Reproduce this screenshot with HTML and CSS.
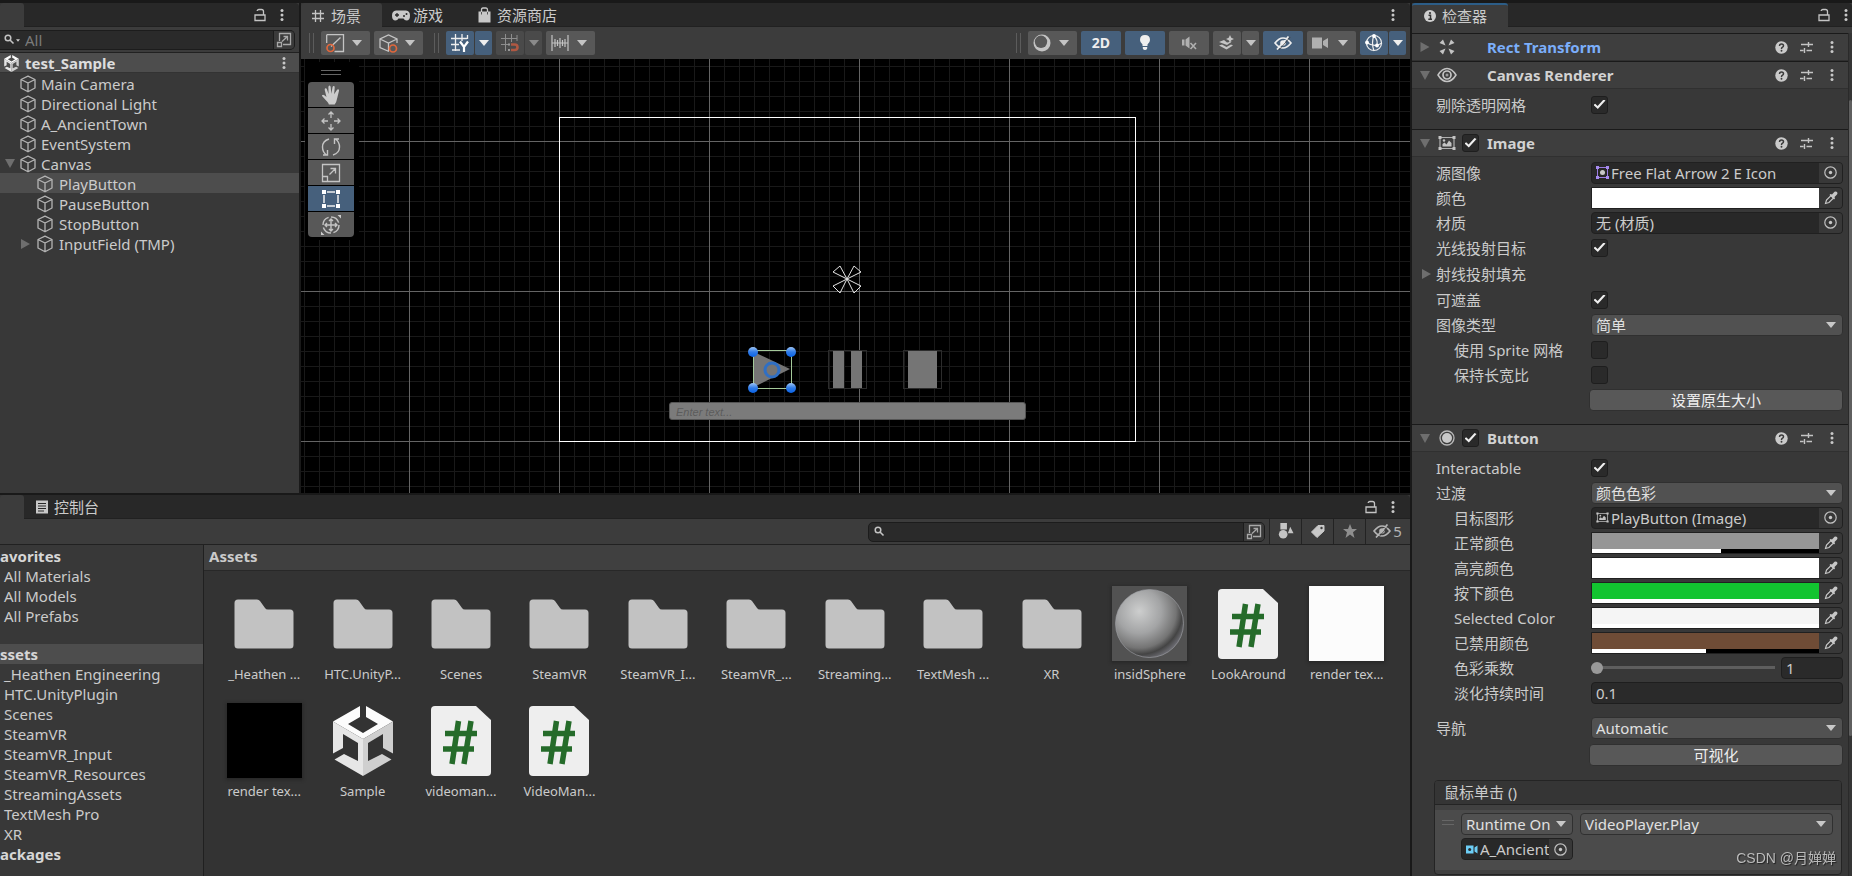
FILE: index.html
```html
<!DOCTYPE html>
<html lang="zh-CN">
<head>
<meta charset="utf-8">
<title>test_Sample</title>
<link rel="stylesheet" href="styles.css">
</head>
<body>
<svg class="defs" aria-hidden="true">
  <symbol id="lock" viewBox="0 0 12 14"><path d="M1 7h10v5.500H1zM9.500 7V3.500Q9.500 1.500 7.500 1.500H5Q3.200 1.500 3.200 3" fill="none" stroke="#c4c4c4" stroke-width="1.300"/></symbol>
  <symbol id="kebab" viewBox="0 0 4 14"><g fill="#c8c8c8"><circle cx="2" cy="2.500" r="1.500"/><circle cx="2" cy="7" r="1.500"/><circle cx="2" cy="11.500" r="1.500"/></g></symbol>
  <symbol id="cube" viewBox="0 0 16 18"><path d="M8 1.200L15 4.500V13L8 16.800L1 13V4.500zM1 4.500L8 8L15 4.500M8 8V16.800" fill="none" stroke="#b4b4b4" stroke-width="1.300" stroke-linejoin="round"/></symbol>
  <symbol id="down" viewBox="0 0 10 6"><path d="M0 0H10L5 6z" fill="currentColor"/></symbol>
  <symbol id="fold" viewBox="0 0 10 9"><path d="M0 0H10L5 9z" fill="currentColor"/></symbol>
  <symbol id="right" viewBox="0 0 9 10"><path d="M0 0L9 5L0 10z" fill="currentColor"/></symbol>
  <symbol id="search" viewBox="0 0 12 12"><circle cx="4" cy="4" r="2.800" fill="none" stroke="#c4c4c4" stroke-width="1.500"/><path d="M6 6L9.500 9.500" stroke="#c4c4c4" stroke-width="1.600"/></symbol>
  <symbol id="popout" viewBox="0 0 16 16"><path d="M3.500 9V1.500H14.500V12.500H7M1.500 10.500H5.500V14.500H1.500zM6 9.500L11.500 4.500M7.500 4.500H11.500V8.500" fill="none" stroke="#a8a8a8" stroke-width="1.300"/></symbol>
  <symbol id="unity" viewBox="0 0 60 70"><path d="M27 0V11L15 18L30 27L45 18L33 11V0L60 15.500L30 33L0 15.500z" fill="#fcfcfc"/><path d="M0 15.500L30 33V70L1.500 53.500L11 48L25 55V37L10 28V42L0 47.500z" fill="#e6e6e6"/><path d="M60 15.500L30 33V70L58.500 53.500L49 48L35 55V37L50 28V42L60 47.500z" fill="#cfcfcf"/></symbol>
  <symbol id="folder" viewBox="0 0 60 50"><path d="M4 0.500H23Q25 0.500 26 2L31 9Q32 10.500 34 10.500H56Q59.500 10.500 59.500 14V46Q59.500 49.500 56 49.500H4Q0.500 49.500 0.500 46V4Q0.500 0.500 4 0.500z" fill="#c2c2c2"/></symbol>
  <symbol id="script" viewBox="0 0 60 70"><path d="M4 0H45L60 14V66Q60 70 56 70H4Q0 70 0 66V4Q0 0 4 0z" fill="#eee"/><path d="M27.500 15L21 58M40 15L33 58M14 27.500H46M12 43H43" fill="none" stroke="#256b2a" stroke-width="5.500"/></symbol>
  <symbol id="sphere" viewBox="0 0 75 75"><defs><radialGradient id="ball" cx=".35" cy=".32" r=".72"><stop offset="0" stop-color="#cdcece"/><stop offset=".45" stop-color="#a3a4a5"/><stop offset=".75" stop-color="#747474"/><stop offset=".88" stop-color="#444"/><stop offset="1" stop-color="#6a6a70"/></radialGradient></defs><path d="M0 0H75V75H0z" fill="#525252"/><circle cx="37.500" cy="37.500" r="34" fill="url(#ball)" stroke="#a2a3a8" stroke-opacity=".6"/></symbol>
  <symbol id="hash" viewBox="0 0 14 14"><path d="M4.500 1V13M9.500 1V13M1 4.500H13M1 9.500H13" stroke="#c4c4c4" stroke-width="1.300"/></symbol>
  <symbol id="pad" viewBox="0 0 18 11"><path d="M4 0.500H14Q18 1 18 5.500Q18 10.500 14.500 10.500Q12.500 10.500 11.500 8.500H6.500Q5.500 10.500 3.500 10.500Q0 10.500 0 5.500Q0 1 4 0.500z" fill="#c8c8c8"/><path d="M5 3v4M3 5h4" stroke="#282828" stroke-width="1.300"/><circle cx="12" cy="6" r="1" fill="#282828"/><circle cx="14.500" cy="4" r="1" fill="#282828"/></symbol>
  <symbol id="bag" viewBox="0 0 13 16"><path d="M0.500 4.500H12.500V15.500H0.500z" fill="#c8c8c8"/><path d="M3.500 7V3Q3.500 1 5 1H8Q9.500 1 9.500 3V7" fill="none" stroke="#c8c8c8" stroke-width="1.300"/><path d="M3.500 5V7.500M9.500 5V7.500" stroke="#555"/></symbol>
  <symbol id="console" viewBox="0 0 12 14"><path d="M0 0.500H12V13.500H0z" fill="#c8c8c8"/><path d="M2 3.500H10M2 6H10M2 8.500H10M2 11H8" stroke="#282828" stroke-width="1.200"/></symbol>
  <symbol id="info" viewBox="0 0 12 12"><circle cx="6" cy="6" r="6" fill="#cfcfcf"/><path d="M4.500 5.300H6.500V9M4.300 9.200H8" fill="none" stroke="#333" stroke-width="1.500"/><circle cx="6" cy="3" r="1.100" fill="#333"/></symbol>
  <symbol id="shading" viewBox="0 0 19 19"><path d="M0.700 0.700H17.500V17.500H8.500M0.700 9V0.700M5 12.500L14.500 3.500" fill="none" stroke="#c4c4c4" stroke-width="1.300"/><circle cx="4.500" cy="14" r="3.500" fill="none" stroke="#e0673c" stroke-width="1.700"/></symbol>
  <symbol id="cubeo" viewBox="0 0 19 19"><path d="M10 17.500L1 13.500V5L9.500 1L18 5V9M1 5L9.500 9L18 5M9.500 9V17" fill="none" stroke="#c4c4c4" stroke-width="1.300"/><circle cx="14" cy="14.500" r="3.500" fill="#585858" stroke="#e0673c" stroke-width="1.700"/></symbol>
  <symbol id="gridy" viewBox="0 0 18 18"><path d="M4.500 0V17M11 0V7M16.500 1V5M0 4.500H16M0 10.500H8M1 16H9" stroke="#eee" stroke-width="1.300"/><path d="M9 7.500L13 13L17 7.500M13 12.500V18" fill="none" stroke="#fff" stroke-width="2.200"/></symbol>
  <symbol id="snap" viewBox="0 0 18 18"><path d="M4.500 0V17M10.500 0V8M0 4.500H16M0 10.500H7M16 1V7" stroke="#8d8d8d" stroke-width="1"/><path d="M10 10.500H13.500Q16.500 10.500 16.500 13.200Q16.500 16 13.500 16H10" fill="none" stroke="#b05842" stroke-width="2.600"/><path d="M7 9.500h2v2H7zM7 15h2v2H7z" fill="#999"/></symbol>
  <symbol id="ruler" viewBox="0 0 18 18"><path d="M1 1V17M17 1V17M4 5V13M6.500 6V12M9 4V14M11.500 6V12M14 5V13M1 9H17" stroke="#c4c4c4" stroke-width="1.200"/></symbol>
  <symbol id="moon" viewBox="0 0 18 18"><circle cx="9" cy="9" r="8.500" fill="#c4c4c4"/><circle cx="8" cy="7.800" r="6.200" fill="#585858"/></symbol>
  <symbol id="bulb" viewBox="0 0 12 18"><path d="M6 1Q11 1 11 6Q11 8.500 8.500 10.500V12H3.500V10.500Q1 8.500 1 6Q1 1 6 1zM3.800 13H8.200V14.500Q7.500 16 6 16Q4.500 16 3.800 14.500z" fill="#eee"/></symbol>
  <symbol id="mute" viewBox="0 0 16 16"><path d="M1 4.500H3.500V10.500H1zM4.500 4.500L8.500 1.500V13.500L4.500 10.500z" fill="#b0b0b0"/><path d="M9.500 8L15 14M15 8L9.500 14" stroke="#b0b0b0" stroke-width="1.600"/></symbol>
  <symbol id="fx" viewBox="0 0 16 16"><path d="M0 7L5 5L8 7.500L13 6.500L8 10zM0 10.500L3 9.500L7.500 12L12 9.500L14 10.500L7.500 14.500z" fill="#c4c4c4"/><path d="M11 0L12.300 2.700L15 4L12.300 5.300L11 8L9.700 5.300L7 4L9.700 2.700z" fill="#c4c4c4"/></symbol>
  <symbol id="eyeoff" viewBox="0 0 18 14"><path d="M1 7Q5 2 9 2Q13 2 17 7Q13 12 9 12Q5 12 1 7zM14.500 0.500L3 13.500" fill="none" stroke="currentColor" stroke-width="1.700"/><circle cx="9" cy="7" r="2.800" fill="currentColor"/><path d="M16.300 1L5 14" stroke="#444" stroke-width=".8"/></symbol>
  <symbol id="cam" viewBox="0 0 16 12"><path d="M0 0.500H10V11.500H0zM11 4L16 1V11L11 8z" fill="#b0b0b0"/></symbol>
  <symbol id="gizmo" viewBox="0 0 18 18"><circle cx="9" cy="9" r="7.500" fill="none" stroke="#eee" stroke-width="1.200"/><path d="M9 1Q6 9 9 17M1 8Q9 14 17 9M9 2Q13 6 12 11" fill="none" stroke="#eee" stroke-width="1.200"/><circle cx="9" cy="2" r="1.900" fill="#fff"/><circle cx="2" cy="8.500" r="1.900" fill="#fff"/><circle cx="12" cy="11.500" r="1.900" fill="#fff"/></symbol>
  <symbol id="hand" viewBox="0 0 18 19"><path d="M5.500 16Q4 14.500 0.500 10.500Q0 9.500 1.500 9.300Q3 9.500 4.700 11.500L3 4.500Q3 3.200 4 3.200Q4.800 3.200 5.200 4.300L6.700 8.500L6.500 2Q6.700 0.500 7.600 0.500Q8.500 0.500 8.700 2L9.300 8.200L10.500 1.800Q11 0.700 11.800 0.900Q12.700 1.200 12.500 2.500L12 8.800L14.600 4.800Q15.500 3.700 16.300 4.300Q17 4.800 16.500 6L15 12Q14.300 16 12.500 18.500H7Q6.500 17 5.500 16z" fill="#ccc"/></symbol>
  <symbol id="move" viewBox="0 0 20 20"><path d="M10 1V7M10 13V19M1 10H7M13 10H19M7.500 3.500L10 1L12.500 3.500M7.500 16.500L10 19L12.500 16.500M3.500 7.500L1 10L3.500 12.500M16.500 7.500L19 10L16.500 12.500" fill="none" stroke="#c4c4c4" stroke-width="1.300"/></symbol>
  <symbol id="rotate" viewBox="0 0 20 20"><path d="M8 2Q1.500 4 1.500 10Q1.500 15 5.500 18M2 18H6.500V13M12 18Q18.500 16 18.500 10Q18.500 5 14.500 2M18 2H13.500V7" fill="none" stroke="#c4c4c4" stroke-width="1.400"/></symbol>
  <symbol id="scale" viewBox="0 0 20 20"><path d="M1.500 1.500H18.500V18.500H1.500zM1.500 13.500H6.500V18.500M8.500 11.500L14 6M9.500 5.500H14.500V10.500" fill="none" stroke="#c4c4c4" stroke-width="1.300"/></symbol>
  <symbol id="recttool" viewBox="0 0 20 20"><path d="M1 1H5V5H1zM15 1H19V5H15zM1 15H5V19H1zM15 15H19V19H15z" fill="#fff"/><path d="M6 3H14M6 17H14M3 6V14M17 6V14" stroke="#eee" stroke-width="1.500"/></symbol>
  <symbol id="multi" viewBox="0 0 20 20"><circle cx="10" cy="10" r="8" fill="none" stroke="#c4c4c4" stroke-width="1.400" stroke-dasharray="10 2.500"/><path d="M10 4V16M4 10H16M8 6L10 4L12 6M8 14L10 16L12 14M6 8L4 10L6 12M14 8L16 10L14 12" fill="none" stroke="#c4c4c4" stroke-width="1.400"/><path d="M16.500 0H20V3.500zM0 16.500V20H3.500z" fill="#ccc"/></symbol>
  <symbol id="help" viewBox="0 0 13 13"><circle cx="6.500" cy="6.500" r="6.200" fill="#cacaca"/><path d="M4.500 5Q4.500 3 6.500 3Q8.500 3 8.500 4.800Q8.500 5.800 7.300 6.400Q6.500 6.800 6.500 8" fill="none" stroke="#3a3a3a" stroke-width="1.500"/><circle cx="6.500" cy="9.800" r=".95" fill="#3a3a3a"/></symbol>
  <symbol id="preset" viewBox="0 0 13 13"><path d="M1 3.500H8M8.500 1V6M8.500 3.500H13M0 9.500H3.500M4.500 7V12M6.500 9.500H12" fill="none" stroke="#c4c4c4" stroke-width="1.400"/></symbol>
  <symbol id="recttr" viewBox="0 0 16 16"><g fill="#c4c4c4"><path d="M6.500 6.500L0.500 4L4 0.500z"/><path d="M9.500 6.500L15.500 4L12 0.500z"/><path d="M6.500 9.500L0.500 12L4 15.500z"/><path d="M9.500 9.500L15.500 12L12 15.500z"/></g></symbol>
  <symbol id="eye" viewBox="0 0 20 16"><path d="M1 8Q5 1.500 10 1.500Q15 1.500 19 8Q15 14.500 10 14.500Q5 14.500 1 8z" fill="none" stroke="#c4c4c4" stroke-width="1.500"/><circle cx="10" cy="8" r="4" fill="none" stroke="#c4c4c4" stroke-width="1.700"/><circle cx="10" cy="8" r="1.500" fill="#999"/></symbol>
  <symbol id="image" viewBox="0 0 18 15"><path d="M2 2H16V13H2z" fill="none" stroke="#b0b0b0" stroke-width="1.200"/><path d="M0.500 0.500h3v3h-3zM14.500 0.500h3v3h-3zM0.500 11.500h3v3h-3zM14.500 11.500h3v3h-3zM4.500 11V8.500L6.500 7L8.500 9L11 5L13.500 7.500V11z" fill="#c4c4c4"/><circle cx="6" cy="5" r="1.200" fill="#c4c4c4"/></symbol>
  <symbol id="radio" viewBox="0 0 16 16"><circle cx="8" cy="8" r="7" fill="none" stroke="#b8b8b8" stroke-width="1.300"/><circle cx="8" cy="8" r="5" fill="#c8c8c8"/></symbol>
  <symbol id="sprite" viewBox="0 0 13 13"><path d="M1.500 1.500H11.500V11.500H1.500z" fill="none" stroke="#9a7be0" stroke-width="1"/><path d="M0 0h3v3H0zM10 0h3v3h-3zM0 10h3v3H0zM10 10h3v3h-3z" fill="#a78bf0"/><circle cx="6.500" cy="6.500" r="2.500" fill="#c8c8c8"/></symbol>
  <symbol id="pick" viewBox="0 0 13 13"><circle cx="6.500" cy="6.500" r="5.700" fill="none" stroke="#c0c0c0" stroke-width="1.200"/><circle cx="6.500" cy="6.500" r="1.700" fill="#c8c8c8"/></symbol>
  <symbol id="dropper" viewBox="0 0 14 14"><path d="M1.500 12.500L2.500 9L7 4.500L9.500 7L5 11.500z" fill="none" stroke="#c8c8c8" stroke-width="1.200"/><path d="M6.500 3L8 3.500L10.500 0.800Q12 0 13 1Q14 2 13 3.500L10.500 6L11 7.500L10 8.500L5.500 4z" fill="#c8c8c8"/></symbol>
  <symbol id="video" viewBox="0 0 12 9"><path d="M0 0.500H7.500V8.500H0zM8.500 2.500L11.500 0.500V8.500L8.500 6.500z" fill="#6ccdf5"/><circle cx="3.700" cy="4.500" r="1.500" fill="#2a2a2a"/></symbol>
  <symbol id="types" viewBox="0 0 16 17"><path d="M2 0H9V7H2zM12.500 4L16 11H10z" fill="#c4c4c4"/><circle cx="5" cy="12" r="4.600" fill="#c4c4c4"/></symbol>
  <symbol id="tag" viewBox="0 0 14 14"><path d="M7 1.500H13V7L6 13.500L0.500 8z" fill="#c8c8c8" stroke="#c8c8c8" stroke-linejoin="round"/><circle cx="10.500" cy="4" r="1.200" fill="#3c3c3c"/></symbol>
  <symbol id="star" viewBox="0 0 14 14"><path d="M7 0L9 5H14L10 8.300L11.500 14L7 10.500L2.500 14L4 8.300L0 5H5z" fill="#8f8f8f"/></symbol>
</svg>

<main class="editor">
  <section class="panel hierarchy">
    <div class="tabs"><div class="tab stub"></div><div class="tabtools"><svg class="i-lock"><use href="#lock"/></svg><svg class="i-kebab"><use href="#kebab"/></svg></div></div>
    <div class="bar searchbar">
      <div class="search left"><svg class="i12"><use href="#search"/></svg><svg class="i-mini"><use href="#down"/></svg><input type="text" placeholder="All" aria-label="搜索层级"><button class="pop" aria-label="打开搜索"><svg class="i16"><use href="#popout"/></svg></button></div>
    </div>
    <div class="scenerow"><svg class="i-unity"><use href="#unity"/></svg><b>test_Sample</b><svg class="i-kebab"><use href="#kebab"/></svg></div>
    <ul class="tree">
      <li><span class="arrow"></span><svg class="i-cube"><use href="#cube"/></svg>Main Camera</li>
      <li><span class="arrow"></span><svg class="i-cube"><use href="#cube"/></svg>Directional Light</li>
      <li><span class="arrow"></span><svg class="i-cube"><use href="#cube"/></svg>A_AncientTown</li>
      <li><span class="arrow"></span><svg class="i-cube"><use href="#cube"/></svg>EventSystem</li>
      <li><span class="arrow"><svg class="i-fold"><use href="#fold"/></svg></span><svg class="i-cube"><use href="#cube"/></svg>Canvas</li>
      <li class="child selected"><span class="arrow"></span><svg class="i-cube"><use href="#cube"/></svg>PlayButton</li>
      <li class="child"><span class="arrow"></span><svg class="i-cube"><use href="#cube"/></svg>PauseButton</li>
      <li class="child"><span class="arrow"></span><svg class="i-cube"><use href="#cube"/></svg>StopButton</li>
      <li class="child"><span class="arrow"><svg class="i-right"><use href="#right"/></svg></span><svg class="i-cube"><use href="#cube"/></svg>InputField (TMP)</li>
    </ul>
  </section>

  <section class="panel scene">
    <div class="tabs">
      <div class="tab active"><svg class="i14"><use href="#hash"/></svg>场景</div>
      <div class="tab game"><svg class="i-pad"><use href="#pad"/></svg>游戏</div>
      <div class="tab store"><svg class="i-bag"><use href="#bag"/></svg>资源商店</div>
      <div class="tabtools"><svg class="i-kebab"><use href="#kebab"/></svg></div>
    </div>
    <div class="bar tools">
      <i class="grip"></i>
      <button class="tb"><svg class="i19"><use href="#shading"/></svg><svg class="i-down"><use href="#down"/></svg></button>
      <button class="tb"><svg class="i19"><use href="#cubeo"/></svg><svg class="i-down"><use href="#down"/></svg></button>
      <i class="grip second"></i>
      <div class="pair"><button class="tb icon on"><svg class="i18"><use href="#gridy"/></svg></button><button class="tb caret on"><svg class="i-down"><use href="#down"/></svg></button></div>
      <div class="pair dim"><button class="tb icon"><svg class="i18"><use href="#snap"/></svg></button><button class="tb caret"><svg class="i-down"><use href="#down"/></svg></button></div>
      <button class="tb"><svg class="i18"><use href="#ruler"/></svg><svg class="i-down"><use href="#down"/></svg></button>
      <span class="grow"></span>
      <i class="grip"></i>
      <button class="tb"><svg class="i18"><use href="#moon"/></svg><svg class="i-down"><use href="#down"/></svg></button>
      <button class="tb wide on">2D</button>
      <button class="tb wide on"><svg class="i-bulb"><use href="#bulb"/></svg></button>
      <button class="tb wide"><svg class="i16"><use href="#mute"/></svg></button>
      <div class="pair"><button class="tb icon"><svg class="i16"><use href="#fx"/></svg></button><button class="tb caret"><svg class="i-down"><use href="#down"/></svg></button></div>
      <button class="tb wide on"><svg class="i-eyeoff"><use href="#eyeoff"/></svg></button>
      <button class="tb"><svg class="i-cam"><use href="#cam"/></svg><svg class="i-down"><use href="#down"/></svg></button>
      <div class="pair"><button class="tb icon on"><svg class="i18"><use href="#gizmo"/></svg></button><button class="tb caret on"><svg class="i-down"><use href="#down"/></svg></button></div>
    </div>
    <div class="viewport">
      <svg class="drawing" aria-hidden="true">
        <defs>
          <pattern id="minor" x="3" y="7" width="15" height="15" patternUnits="userSpaceOnUse"><path d="M.5 0V15M0 .5H15" stroke="#191919"/></pattern>
          <pattern id="major" x="108" y="82" width="150" height="150" patternUnits="userSpaceOnUse"><path d="M.5 0V150M0 .5H150" stroke="#646464"/></pattern>
          <linearGradient id="knob" x2="0" y2="1"><stop offset="0" stop-color="#9cc4f5"/><stop offset=".5" stop-color="#2f7be8"/><stop offset="1" stop-color="#0a63e6"/></linearGradient>
        </defs>
        <rect width="100%" height="100%" fill="url(#minor)"/>
        <rect width="100%" height="100%" fill="url(#major)"/>
        <rect x="4" y="3" width="54" height="178" fill="#000"/>
        <rect x="258.500" y="58.500" width="576" height="324" fill="none" stroke="#fff"/>
        <path d="M546 220L532 213L539 207zM546 220L553 207L560 213zM546 220L532 227L539 234zM546 220L560 227L553 234z" fill="none" stroke="#e4e4e4"/>
        <path d="M453 293L489 310L453 328z" fill="#757575"/>
        <rect x="452.500" y="291.500" width="38" height="38" fill="none" stroke="#a4c99a"/>
        <g fill="url(#knob)"><circle cx="452" cy="293" r="5"/><circle cx="490" cy="293" r="5"/><circle cx="452" cy="329" r="5"/><circle cx="490" cy="329" r="5"/></g>
        <circle cx="471" cy="311" r="7" fill="none" stroke="#2f6fc4" stroke-width="3"/>
        <rect x="527.500" y="291.500" width="38" height="38" fill="none" stroke="#2c2c2c"/>
        <path d="M532 292H543V329H532zM550 292H561V329H550z" fill="#757575"/>
        <rect x="602.500" y="291.500" width="38" height="38" fill="none" stroke="#2c2c2c"/>
        <path d="M607 292H636V329H607z" fill="#757575"/>
      </svg>
      <input class="tmp" type="text" placeholder="Enter text..." aria-label="InputField">
      <div class="toolbox">
        <i class="handle"></i>
        <button aria-label="视图"><svg class="i20"><use href="#hand"/></svg></button>
        <button aria-label="移动"><svg class="i20"><use href="#move"/></svg></button>
        <button aria-label="旋转"><svg class="i20"><use href="#rotate"/></svg></button>
        <button aria-label="缩放"><svg class="i20"><use href="#scale"/></svg></button>
        <button class="on" aria-label="矩形"><svg class="i20"><use href="#recttool"/></svg></button>
        <button aria-label="变换"><svg class="i20"><use href="#multi"/></svg></button>
      </div>
    </div>
  </section>

  <section class="panel project">
    <div class="tabs"><div class="tab stub"></div><div class="tab console"><svg class="i-console"><use href="#console"/></svg>控制台</div><div class="tabtools"><svg class="i-lock"><use href="#lock"/></svg><svg class="i-kebab"><use href="#kebab"/></svg></div></div>
    <div class="bar assetbar">
      <div class="search"><svg class="i12"><use href="#search"/></svg><input type="text" aria-label="搜索资源"><button class="pop" aria-label="打开搜索"><svg class="i16"><use href="#popout"/></svg></button></div>
      <button class="cell"><svg class="i16"><use href="#types"/></svg></button>
      <button class="cell"><svg class="i14"><use href="#tag"/></svg></button>
      <button class="cell"><svg class="i14"><use href="#star"/></svg></button>
      <button class="cell count"><svg class="i-eyeoff"><use href="#eyeoff"/></svg>5</button>
    </div>
    <div class="projectbody">
      <ul class="folders">
        <li class="head">avorites</li><li>All Materials</li><li>All Models</li><li>All Prefabs</li>
        <li class="head group selected">ssets</li><li>_Heathen Engineering</li><li>HTC.UnityPlugin</li><li>Scenes</li><li>SteamVR</li><li>SteamVR_Input</li><li>SteamVR_Resources</li><li>StreamingAssets</li><li>TextMesh Pro</li><li>XR</li>
        <li class="head">ackages</li>
      </ul>
      <div class="assets">
        <div class="crumb">Assets</div>
        <div class="grid">
          <figure><div class="thumb"><svg class="i-folder"><use href="#folder"/></svg></div><figcaption>_Heathen ...</figcaption></figure>
          <figure><div class="thumb"><svg class="i-folder"><use href="#folder"/></svg></div><figcaption>HTC.UnityP...</figcaption></figure>
          <figure><div class="thumb"><svg class="i-folder"><use href="#folder"/></svg></div><figcaption>Scenes</figcaption></figure>
          <figure><div class="thumb"><svg class="i-folder"><use href="#folder"/></svg></div><figcaption>SteamVR</figcaption></figure>
          <figure><div class="thumb"><svg class="i-folder"><use href="#folder"/></svg></div><figcaption>SteamVR_I...</figcaption></figure>
          <figure><div class="thumb"><svg class="i-folder"><use href="#folder"/></svg></div><figcaption>SteamVR_...</figcaption></figure>
          <figure><div class="thumb"><svg class="i-folder"><use href="#folder"/></svg></div><figcaption>Streaming...</figcaption></figure>
          <figure><div class="thumb"><svg class="i-folder"><use href="#folder"/></svg></div><figcaption>TextMesh ...</figcaption></figure>
          <figure><div class="thumb"><svg class="i-folder"><use href="#folder"/></svg></div><figcaption>XR</figcaption></figure>
          <figure><div class="thumb framed"><svg class="i75"><use href="#sphere"/></svg></div><figcaption>insidSphere</figcaption></figure>
          <figure><div class="thumb"><svg class="i-doc"><use href="#script"/></svg></div><figcaption>LookAround</figcaption></figure>
          <figure><div class="thumb framed white"></div><figcaption>render tex...</figcaption></figure>
          <figure><div class="thumb framed black"></div><figcaption>render tex...</figcaption></figure>
          <figure><div class="thumb"><svg class="i-doc"><use href="#unity"/></svg></div><figcaption>Sample</figcaption></figure>
          <figure><div class="thumb"><svg class="i-doc"><use href="#script"/></svg></div><figcaption>videoman...</figcaption></figure>
          <figure><div class="thumb"><svg class="i-doc"><use href="#script"/></svg></div><figcaption>VideoMan...</figcaption></figure>
        </div>
      </div>
    </div>
  </section>

  <section class="panel inspector">
    <div class="tabs"><div class="tab active focus"><svg class="i12"><use href="#info"/></svg>检查器</div><div class="tabtools"><svg class="i-lock"><use href="#lock"/></svg><svg class="i-kebab"><use href="#kebab"/></svg></div></div>
    <div class="scroll">
      <div class="components">
        <header class="comp link"><svg class="i-right fold"><use href="#right"/></svg><svg class="ci"><use href="#recttr"/></svg><h2>Rect Transform</h2><svg class="i13"><use href="#help"/></svg><svg class="i13"><use href="#preset"/></svg><svg class="i-kebab"><use href="#kebab"/></svg></header>
        <header class="comp"><svg class="i-fold fold"><use href="#fold"/></svg><svg class="ci big"><use href="#eye"/></svg><h2>Canvas Renderer</h2><svg class="i13"><use href="#help"/></svg><svg class="i13"><use href="#preset"/></svg><svg class="i-kebab"><use href="#kebab"/></svg></header>
        <div class="fields short">
          <div class="row"><label for="cull">剔除透明网格</label><input id="cull" type="checkbox" checked></div>
        </div>
        <header class="comp"><svg class="i-fold fold"><use href="#fold"/></svg><svg class="ci"><use href="#image"/></svg><input type="checkbox" checked aria-label="启用 Image"><h2>Image</h2><svg class="i13"><use href="#help"/></svg><svg class="i13"><use href="#preset"/></svg><svg class="i-kebab"><use href="#kebab"/></svg></header>
        <div class="fields image">
          <div class="row"><label for="src">源图像</label><div class="object"><svg class="i13"><use href="#sprite"/></svg><input id="src" type="text" value="Free Flat Arrow 2 E Icon" readonly><button aria-label="选择"><svg class="i13"><use href="#pick"/></svg></button></div></div>
          <div class="row"><label for="col">颜色</label><div class="color"><div class="swatch"><input id="col" type="color" value="#ffffff"><div class="alpha"><div style="width:100%"></div></div></div><button aria-label="取色"><svg class="i14"><use href="#dropper"/></svg></button></div></div>
          <div class="row"><label for="mat">材质</label><div class="object"><input id="mat" type="text" value="无 (材质)" readonly><button aria-label="选择"><svg class="i13"><use href="#pick"/></svg></button></div></div>
          <div class="row"><label for="ray">光线投射目标</label><input id="ray" type="checkbox" checked></div>
          <div class="row loose foldrow"><svg class="i-right"><use href="#right"/></svg><span>射线投射填充</span></div>
          <div class="row loose"><label for="mask">可遮盖</label><input id="mask" type="checkbox" checked></div>
          <div class="row"><label for="type">图像类型</label><div class="select"><select id="type"><option>简单</option></select><svg class="i-down"><use href="#down"/></svg></div></div>
          <div class="row sub"><label for="mesh">使用 Sprite 网格</label><input id="mesh" type="checkbox"></div>
          <div class="row sub"><label for="asp">保持长宽比</label><input id="asp" type="checkbox"></div>
          <div class="row end"><button class="push">设置原生大小</button></div>
        </div>
        <header class="comp"><svg class="i-fold fold"><use href="#fold"/></svg><svg class="ci"><use href="#radio"/></svg><input type="checkbox" checked aria-label="启用 Button"><h2>Button</h2><svg class="i13"><use href="#help"/></svg><svg class="i13"><use href="#preset"/></svg><svg class="i-kebab"><use href="#kebab"/></svg></header>
        <div class="fields">
          <div class="row"><label for="int">Interactable</label><input id="int" type="checkbox" checked></div>
          <div class="row"><label for="trans">过渡</label><div class="select"><select id="trans"><option>颜色色彩</option></select><svg class="i-down"><use href="#down"/></svg></div></div>
          <div class="row sub"><label for="tgt">目标图形</label><div class="object"><svg class="i13"><use href="#image"/></svg><input id="tgt" type="text" value="PlayButton (Image)" readonly><button aria-label="选择"><svg class="i13"><use href="#pick"/></svg></button></div></div>
          <div class="row sub"><label for="c1">正常颜色</label><div class="color"><div class="swatch"><input id="c1" type="color" value="#969696"><div class="alpha"><div style="width:57%"></div></div></div><button aria-label="取色"><svg class="i14"><use href="#dropper"/></svg></button></div></div>
          <div class="row sub"><label for="c2">高亮颜色</label><div class="color"><div class="swatch"><input id="c2" type="color" value="#ffffff"><div class="alpha"><div style="width:100%"></div></div></div><button aria-label="取色"><svg class="i14"><use href="#dropper"/></svg></button></div></div>
          <div class="row sub"><label for="c3">按下颜色</label><div class="color"><div class="swatch"><input id="c3" type="color" value="#12c430"><div class="alpha"><div style="width:100%"></div></div></div><button aria-label="取色"><svg class="i14"><use href="#dropper"/></svg></button></div></div>
          <div class="row sub"><label for="c4">Selected Color</label><div class="color"><div class="swatch"><input id="c4" type="color" value="#f5f5f5"><div class="alpha"><div style="width:100%"></div></div></div><button aria-label="取色"><svg class="i14"><use href="#dropper"/></svg></button></div></div>
          <div class="row sub"><label for="c5">已禁用颜色</label><div class="color"><div class="swatch"><input id="c5" type="color" value="#6f4c36"><div class="alpha"><div style="width:50%"></div></div></div><button aria-label="取色"><svg class="i14"><use href="#dropper"/></svg></button></div></div>
          <div class="row sub"><label for="mul">色彩乘数</label><div class="slide"><input id="mul" type="range" min="1" max="5" value="1"><input class="text" type="text" value="1" aria-label="色彩乘数"></div></div>
          <div class="row sub"><label for="fade">淡化持续时间</label><input id="fade" class="text" type="text" value="0.1"></div>
          <div class="row nav"><label for="nav">导航</label><div class="select"><select id="nav"><option>Automatic</option></select><svg class="i-down"><use href="#down"/></svg></div></div>
          <div class="row visual end"><button class="push">可视化</button></div>
        </div>
        <div class="event">
          <h3>鼠标单击 ()</h3>
          <div class="call">
            <i class="handle"></i>
            <div class="who">
              <div class="select"><select aria-label="调用时机"><option>Runtime On</option></select><svg class="i-down"><use href="#down"/></svg></div>
              <div class="object"><svg class="i-video"><use href="#video"/></svg><input type="text" value="A_AncientTown" readonly aria-label="目标对象"><button aria-label="选择"><svg class="i13"><use href="#pick"/></svg></button></div>
            </div>
            <div class="select"><select aria-label="函数"><option>VideoPlayer.Play</option></select><svg class="i-down"><use href="#down"/></svg></div>
          </div>
        </div>
      </div>
      <div class="track"><div class="thumbbar"></div></div>
    </div>
  </section>
</main>
<div class="mark">CSDN @月婵婵</div>
</body>
</html>
```
FILE: styles.css
```css
* { box-sizing: border-box; }
body { margin: 0; background: #191919; color: #cbcbcb; overflow: hidden; font: 15px/20px "Noto Sans", "Noto Sans CJK SC", sans-serif; }
button, input, select { font: inherit; color: inherit; margin: 0; padding: 0; border: 0; background: none; min-width: 0; border-radius: 0; outline: none; }
ul { list-style: none; margin: 0; padding: 0; }
h2, h3, figure { margin: 0; font: inherit; }
svg { display: block; flex: none; }
.defs { position: absolute; width: 0; height: 0; }

.editor { display: grid; height: 100vh; padding-top: 3px; gap: 2px; grid-template-columns: 299px minmax(0, 1fr) 440px; grid-template-rows: 490px minmax(0, 1fr); grid-template-areas: "tree scene insp" "proj proj insp"; }
.panel { display: flex; flex-direction: column; min-width: 0; min-height: 0; background: #383838; overflow: hidden; }
.hierarchy { grid-area: tree; }
.scene { grid-area: scene; }
.project { grid-area: proj; }
.inspector { grid-area: insp; }

.tabs { display: flex; flex: none; height: 24px; background: #282828; border-bottom: 1px solid #212121; border-radius: 4px 4px 0 0; }
.tab { display: flex; align-items: center; gap: 6px; padding: 1px 10px 0; }
.tab.active, .tab.stub { background: #3c3c3c; height: 24px; border-radius: 3px 3px 0 0; }
.tab.active { padding: 1px 21px 0 10px; }
.tab.stub { width: 24px; }
.tab.focus { border-top: 2px solid #2c5d87; padding-top: 0; gap: 6px; padding-left: 12px; }
.tab.game { gap: 3px; }
.tab.store { padding-left: 25px; }
.tab.console { padding-left: 12px; }
.tabtools { display: flex; gap: 14px; align-items: center; margin-left: auto; padding-right: 15px; }
.inspector .tabtools { padding-right: 4px; }
.bar { display: flex; flex: none; background: #3c3c3c; }

.i12 { width: 12px; height: 12px; }
.i13 { width: 13px; height: 13px; }
.i14 { width: 14px; height: 14px; }
.i16 { width: 16px; height: 16px; }
.i18 { width: 18px; height: 18px; }
.i19 { width: 19px; height: 19px; }
.i20 { width: 20px; height: 20px; }
.i75 { width: 75px; height: 75px; }
.i-lock { width: 12px; height: 14px; }
.i-kebab { width: 4px; height: 14px; }
.i-cube { width: 16px; height: 18px; }
.i-down { width: 10px; height: 6px; }
.i-fold { width: 10px; height: 9px; color: #6e6e6e; }
.i-right { width: 9px; height: 10px; color: #6e6e6e; }
.i-mini { width: 4px; height: 3px; }
.i-unity { width: 15px; height: 17px; }
.i-pad { width: 18px; height: 11px; }
.i-bag { width: 13px; height: 16px; }
.i-console { width: 12px; height: 14px; }
.i-bulb { width: 12px; height: 18px; }
.i-eyeoff { width: 18px; height: 14px; }
.i-cam { width: 16px; height: 12px; }
.i-folder { width: 60px; height: 50px; }
.i-doc { width: 60px; height: 70px; }
.i-video { width: 12px; height: 9px; }

.search { display: flex; align-items: center; height: 20px; background: #2a2a2a; border: 1px solid #1c1c1c; border-radius: 5px; padding-left: 5px; overflow: hidden; }
.search input { flex: 1; padding-left: 5px; height: 18px; }
.search input::placeholder { color: #7a7a7a; }
.search .pop { display: grid; place-items: center; width: 21px; height: 18px; background: #3a3a3a; border-left: 1px solid #1c1c1c; }
.searchbar { padding: 3px 4px 2px 0; height: 26px; border-bottom: 1px solid #212121; }
.search.left { flex: 1; border-left: 0; border-radius: 0 5px 5px 0; padding-left: 4px; }

.scenerow { display: flex; align-items: center; gap: 6px; height: 20px; flex: none; padding: 1px 13px 0 4px; background: #4d4d4d; border-bottom: 1px solid #333; color: #ddd; }
.scenerow b { flex: 1; }
.tree li { display: flex; align-items: center; gap: 5px; height: 20px; padding: 1px 0 0 5px; }
.tree li.child { padding-left: 21px; gap: 6px; }
.tree .arrow { width: 10px; }
.selected { background: #4d4d4d; }

.tools { height: 32px; align-items: center; gap: 4px; padding: 0 4px 0 8px; color: #c4c4c4; }
.grip { width: 5px; height: 20px; border: solid #5c5c5c; border-width: 0 1px; margin-right: 3px; }
.grip.second { margin: 0 3px 0 7px; }
.grow { flex: 1; }
.tb { display: flex; align-items: center; justify-content: space-between; height: 24px; width: 49px; padding: 0 8px 0 5px; background: #585858; border-radius: 2px; }
.tb.wide, .tb.icon, .tb.caret { justify-content: center; padding: 0; }
.tb.wide { width: 40px; font-weight: 700; font-size: 14px; }
.tb.icon { width: 28px; }
.tb.caret { width: 17px; }
.on { background: #46607c; color: #eee; }
.pair { display: flex; gap: 1px; }
.dim .tb { background: #4a4a4a; color: #8a8a8a; }

.viewport { position: relative; flex: 1; background: #000; overflow: hidden; }
.drawing { position: absolute; inset: 0; width: 100%; height: 100%; }
.tmp { position: absolute; left: 368px; top: 343px; width: 357px; height: 18px; background: #7b7b7b; border: 1px solid #555; border-radius: 3px; padding: 2px 6px 0; font: italic 11px/14px "Liberation Sans", sans-serif; }
.tmp::placeholder { color: #5c5c5c; }
.toolbox { position: absolute; left: 7px; top: 11px; display: grid; gap: 1px; width: 46px; justify-items: stretch; }
.handle { display: block; border: solid #666; border-width: 1px 0; height: 5px; }
.toolbox .handle { width: 20px; justify-self: center; margin-bottom: 6px; }
.toolbox button { display: grid; place-items: center; height: 25px; background: #585858; }
.toolbox button.on { background: #46607c; }
.toolbox button:nth-of-type(1) { border-radius: 4px 4px 0 0; }
.toolbox button:nth-of-type(6) { border-radius: 0 0 4px 4px; }

.assetbar { height: 26px; justify-content: flex-end; border-bottom: 1px solid #212121; }
.assetbar .search { width: 397px; margin: 3px 4px 0 0; }
.assetbar .cell { display: flex; align-items: center; justify-content: center; width: 32px; height: 25px; padding-bottom: 2px; border-left: 1px solid #232323; color: #b4b4b4; }
.assetbar .count { width: 45px; gap: 2px; padding-right: 1px; }
.projectbody { display: flex; flex: 1; min-height: 0; }
.folders { width: 204px; flex: none; padding-top: 1px; border-right: 1px solid #202020; }
.folders li { height: 20px; padding-left: 4px; white-space: nowrap; }
.folders .head { padding-left: 0; font-weight: 700; color: #d6d6d6; }
.folders .group { margin-top: 18px; }
.assets { flex: 1; min-width: 0; background: #333; }
.crumb { height: 26px; padding: 1px 5px; background: #404040; border-bottom: 1px solid #282828; font-weight: 700; }
.grid { display: grid; grid-template-columns: repeat(auto-fill, minmax(92px, 1fr)); row-gap: 19px; padding: 15px 14px 0 11px; }
.grid figure { display: flex; flex-direction: column; align-items: center; gap: 3px; }
.thumb { width: 75px; height: 75px; display: grid; place-items: center; }
.framed { box-shadow: 0 1px 3px 1px #282828; }
.white { background: #fcfcfc; }
.black { background: #000; }
.grid figcaption { font-size: 13px; white-space: nowrap; }

.scroll { display: flex; flex: 1; min-height: 0; padding-top: 6px; background: #3c3c3c; }
.components { flex: 1; min-width: 0; background: #383838; }
.track { width: 4px; border-left: 1px solid #2a2a2a; background: #353535; padding-top: 67px; }
.thumbbar { height: 82%; background: #5f5f5f; border-radius: 2px; }
.comp { display: flex; align-items: center; height: 28px; padding: 0 14px 0 8px; background: #3e3e3e; border-top: 1px solid #1a1a1a; border-bottom: 1px solid #303030; }
.comp .fold { width: 10px; }
.comp .ci { width: 18px; height: 16px; margin: 0 6px 0 8px; }
.comp .ci.big { width: 20px; margin: 0 5px 0 7px; }
.comp h2 { flex: 1; font-weight: 700; color: #d2d2d2; padding-left: 8px; }
.comp svg + h2 { padding-left: 25px; }
.comp h2 ~ svg { margin-left: 12px; }
.comp h2 ~ .i-kebab { margin-left: 17px; }
.comp.link h2 { color: #7baefa; }
.fields { padding: 3px 5px 0 24px; }
.fields.short { padding-bottom: 12px; }
.fields.image { padding-bottom: 12px; }
.row { display: grid; grid-template-columns: 155px minmax(0, 1fr); align-items: center; height: 25px; }
.row.sub { padding-left: 18px; grid-template-columns: 137px minmax(0, 1fr); }
.row.loose { margin-top: 1px; }
.row.nav { margin-top: 10px; }
.row.visual { margin-top: 2px; }
.row.end { grid-template-columns: 1fr; padding-left: 153px; }
.foldrow { display: flex; gap: 5px; margin-left: -14px; }

input[type=checkbox] { appearance: none; width: 17px; height: 18px; background: #2a2a2a; border: 1px solid #1e1e1e; border-radius: 3px; display: grid; place-items: center; flex: none; }
input[type=checkbox]:checked::before { content: ""; width: 12px; height: 10px; background: #eee; clip-path: polygon(0 55%, 14% 42%, 34% 66%, 84% 0, 100% 10%, 36% 96%); }
.object, .color { display: flex; align-items: center; height: 22px; background: #282828; border: 1px solid #202020; border-radius: 4px; overflow: hidden; }
.object { padding-left: 4px; }
.object input { flex: 1; height: 20px; padding-left: 2px; }
.object input:first-child { padding-left: 0; }
.object button, .color button { display: grid; place-items: center; width: 23px; height: 20px; background: #383838; flex: none; }
.color { border-radius: 0 4px 4px 0; }
.swatch { flex: 1; height: 20px; display: flex; flex-direction: column; }
.swatch input { appearance: none; width: 100%; height: 16px; }
.swatch input::-webkit-color-swatch-wrapper { padding: 0; }
.swatch input::-webkit-color-swatch { border: 0; border-radius: 0; }
.alpha { height: 4px; background: #000; }
.alpha div { height: 4px; background: #fff; }
.select { position: relative; height: 22px; }
.select select { appearance: none; width: 100%; height: 22px; padding: 0 20px 0 4px; background: #515151; border: 1px solid #303030; border-radius: 4px; color: #e0e0e0; line-height: 20px; }
.select svg { position: absolute; right: 7px; top: 8px; color: #c8c8c8; pointer-events: none; }
.push { height: 22px; background: #585858; border: 1px solid #303030; border-radius: 4px; color: #eee; }
.text { height: 22px; width: 100%; background: #2a2a2a; border: 1px solid #1e1e1e; border-radius: 4px; padding-left: 4px; }
.slide { display: flex; gap: 6px; align-items: center; }
.slide .text { width: 62px; flex: none; }
.slide input[type=range] { appearance: none; flex: 1; height: 12px; background: linear-gradient(#5e5e5e, #5e5e5e) center / 100% 3px no-repeat; }
.slide input[type=range]::-webkit-slider-thumb { appearance: none; width: 12px; height: 12px; border-radius: 6px; background: #999; }

.event { margin: 13px 6px 0 22px; border: 1px solid #242424; border-radius: 4px; background: #414141; overflow: hidden; }
.event h3 { height: 24px; padding: 1px 9px; background: #353535; border-bottom: 1px solid #242424; }
.call { display: grid; grid-template-columns: 12px 112px minmax(0, 1fr); column-gap: 7px; margin: 5px 0 4px; padding: 3px 8px 10px 7px; background: #4b4b4b; align-items: start; }
.call .handle { margin-top: 7px; }
.who { display: grid; gap: 3px; }
.mark { position: fixed; right: 16px; bottom: 8px; color: #bbb; font-size: 14px; font-family: "Liberation Sans", "Noto Sans CJK SC", sans-serif; text-shadow: 1px 1px 1px #222; }
```
